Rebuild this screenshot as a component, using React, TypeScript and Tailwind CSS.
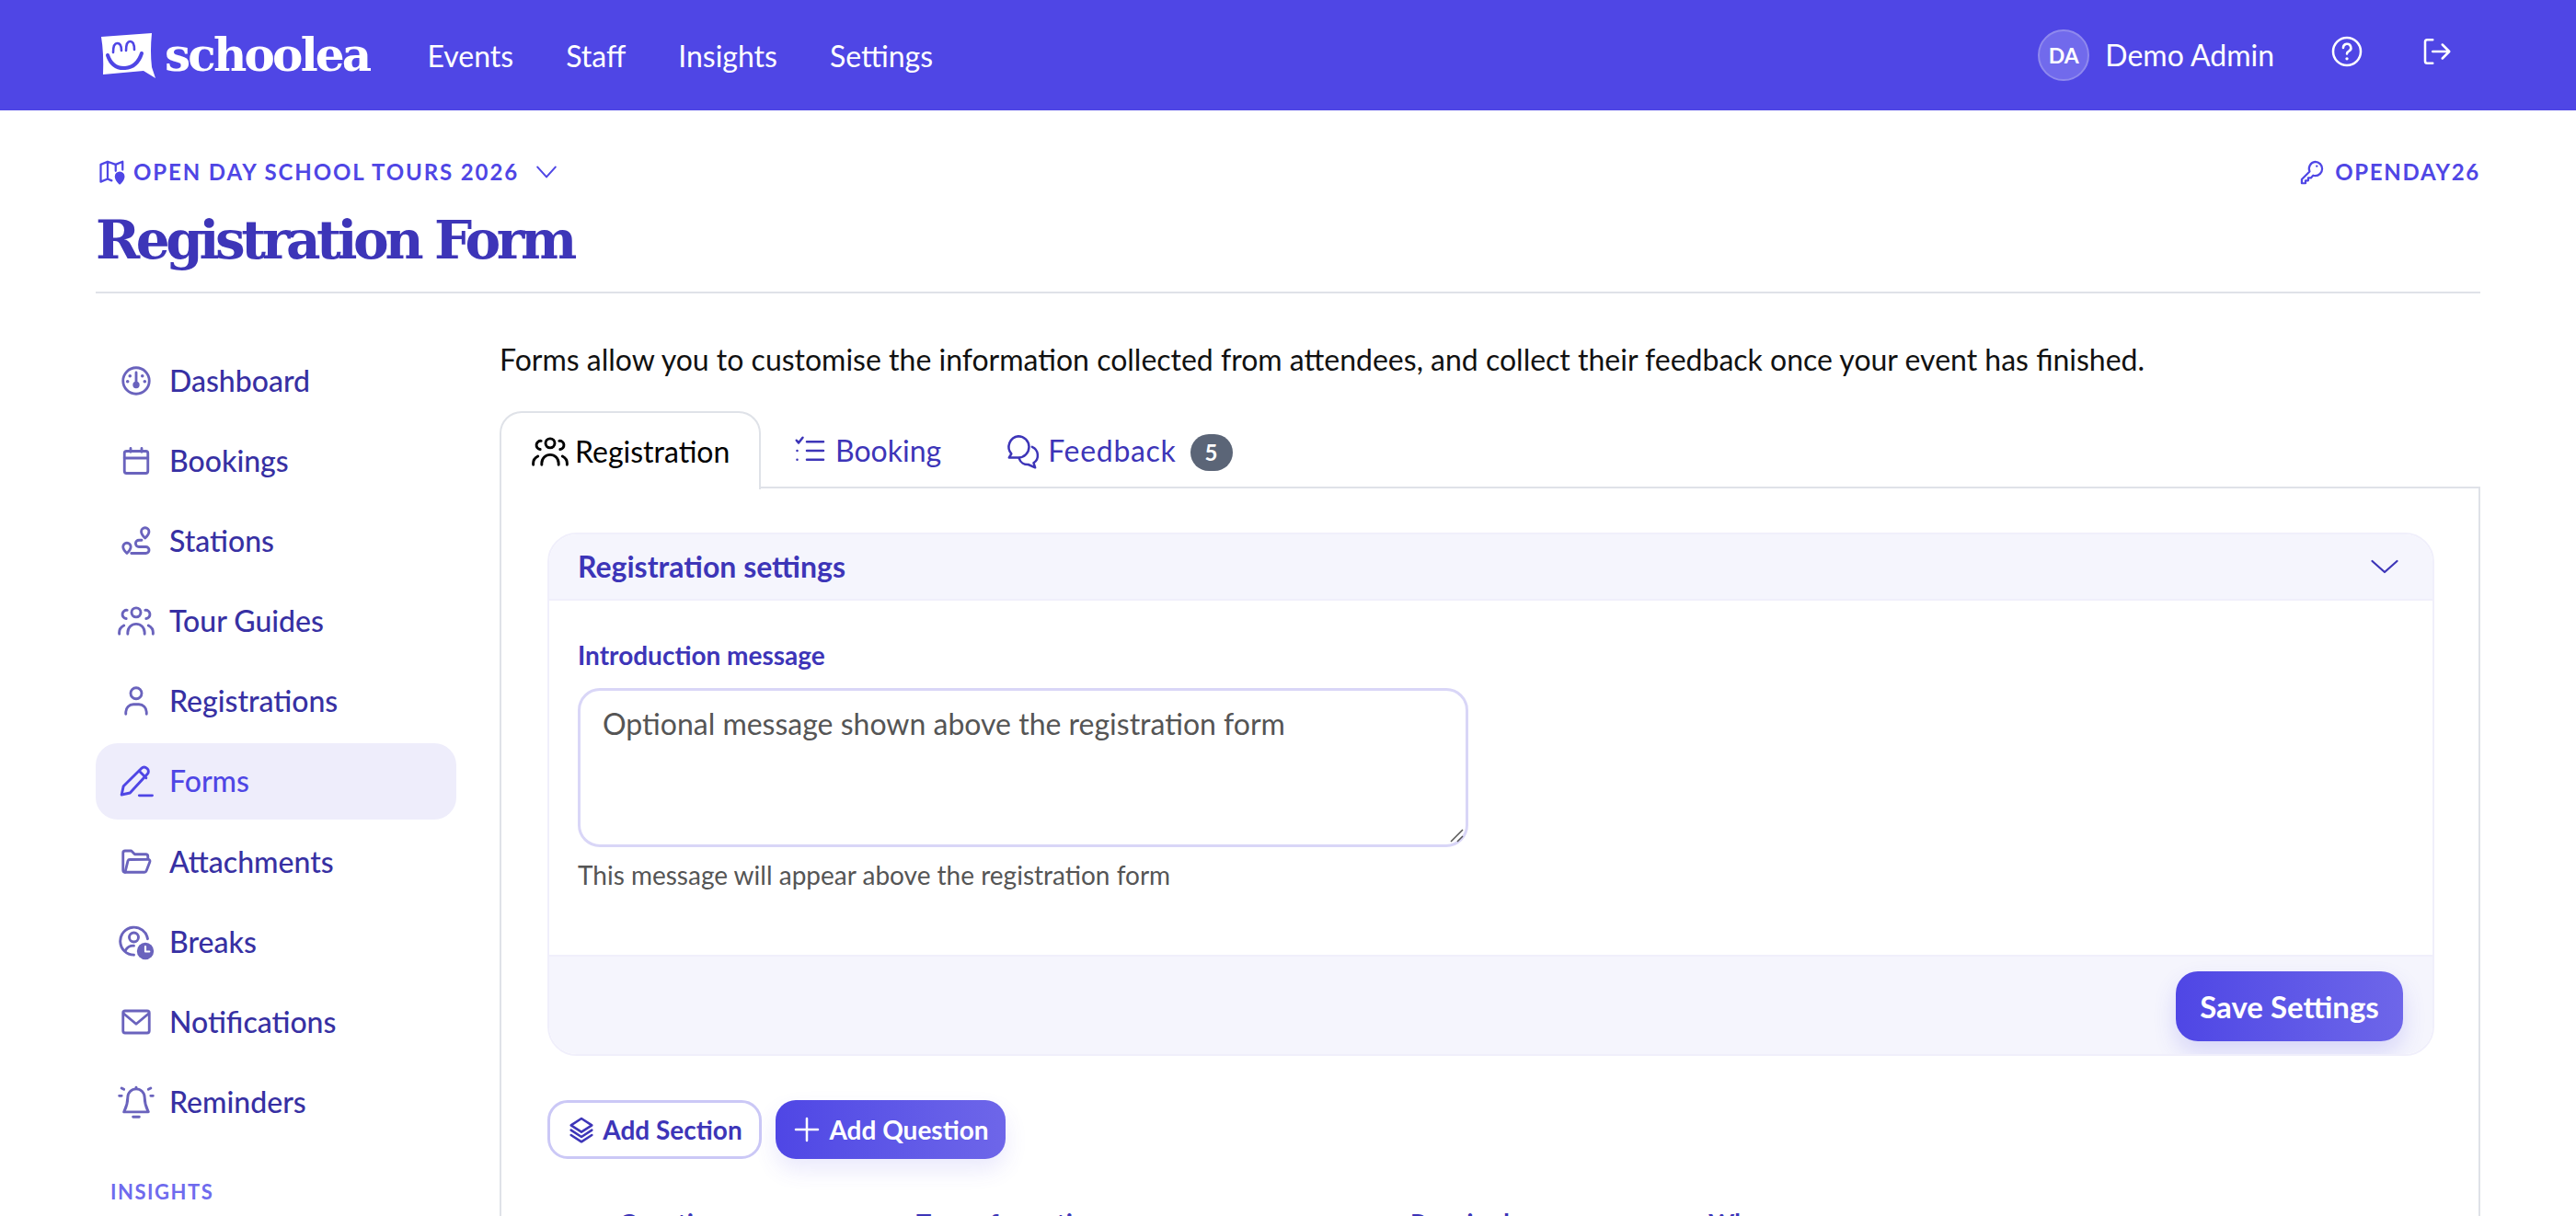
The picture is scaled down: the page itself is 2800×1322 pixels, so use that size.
import type { ReactNode } from 'react';

const sans = '[font-family:Lato,"Liberation_Sans",sans-serif]';

function Svg({ className, children, sw = 1.9 }: { className?: string; children: ReactNode; sw?: number }) {
  return (
    <svg viewBox="0 0 24 24" fill="none" stroke="currentColor" strokeWidth={sw} strokeLinecap="round" strokeLinejoin="round" className={className}>
      {children}
    </svg>
  );
}

function LogoMark() {
  return (
    <svg viewBox="0 0 60 49" className="h-[49px] w-[60px] shrink-0">
      <path d="M1 4 L56 0 Q54 20 56 37 L60 49 L47 41 L3 45 Q4 22 1 4 Z" fill="#fff" />
      <path d="M8 24 Q13 39 27 38 Q40 37 45 22" fill="none" stroke="#4f46e5" strokeWidth="4" strokeLinecap="round" />
      <path d="M14 21 Q14 11 18.500 11 Q23 11 23 19 M28 19 Q28 9 32.500 9 Q37 9 37 18" fill="none" stroke="#4f46e5" strokeWidth="2.600" strokeLinecap="round" />
    </svg>
  );
}

const icons: Record<string, ReactNode> = {
  Dashboard: (
    <>
      <circle cx="12" cy="12" r="9.500" />
      <path d="M12 6v8" />
      <circle cx="12" cy="15" r="1.500" fill="currentColor" />
      <path d="M7.500 8.500h.01M16.500 8.500h.01M5.800 12.500h.01M18.200 12.500h.01" strokeWidth="2.400" />
    </>
  ),
  Bookings: (
    <>
      <rect x="3.500" y="5" width="17" height="16" rx="1.500" />
      <path d="M3.500 10h17M8 3v2.500M16 3v2.500" />
    </>
  ),
  Stations: (
    <>
      <path d="M18.500 2.500a2.800 2.800 0 0 1 2.800 2.800c0 2-2.800 4.700-2.800 4.700s-2.800-2.700-2.800-4.700a2.800 2.800 0 0 1 2.800-2.800Z" />
      <path d="M5.300 13.500a2.800 2.800 0 0 1 2.800 2.800c0 2-2.800 4.700-2.800 4.700s-2.800-2.700-2.800-4.700a2.800 2.800 0 0 1 2.800-2.800Z" />
      <path d="M16 11.500h-2a2.400 2.400 0 0 0 0 4.800h5a2.300 2.300 0 0 1 0 4.700H8.500" />
    </>
  ),
  'Tour Guides': (
    <>
      <circle cx="12" cy="6.500" r="3" />
      <path d="M5.500 10.500a2.600 2.600 0 0 1 .6-5.500M18.500 10.500a2.600 2.600 0 0 0-.6-5.500" />
      <path d="M6.500 20.500v-1a5.500 5.500 0 0 1 11 0v1M1 20.500a5.500 5.500 0 0 1 3-5.500M23 20.500a5.500 5.500 0 0 0-3-5.500" />
    </>
  ),
  Registrations: (
    <>
      <circle cx="12" cy="6.500" r="4" />
      <path d="M4.500 21.500v-1.500a5.500 5.500 0 0 1 5.500-5.500h4a5.500 5.500 0 0 1 5.500 5.500v1.500" />
    </>
  ),
  Forms: (
    <>
      <path d="M2.500 21l1.200-5.500L15.500 3.700a2.400 2.400 0 0 1 3.400 0l.4.4a2.400 2.400 0 0 1 0 3.400L8 19.800 2.500 21Z" />
      <path d="M14 5.500l4.500 4.500M14 21.500h8.500" />
    </>
  ),
  Attachments: (
    <>
      <path d="M4 19.500a1.500 1.500 0 0 1-1.500-1.500V5.500A1.500 1.500 0 0 1 4 4h4.500l2.500 2.500h8a1.500 1.500 0 0 1 1.500 1.500v1.500" />
      <path d="M4 19.500h14a1.500 1.500 0 0 0 1.400-1l2.500-6.500a1.200 1.200 0 0 0-1.100-1.700H7.500A1.500 1.500 0 0 0 6 11.300L4 19.500Z" />
    </>
  ),
  Breaks: (
    <>
      <path d="M10.500 20.500A9 9 0 1 1 19.500 10" />
      <circle cx="10.500" cy="9" r="3" />
      <path d="M5 17.500a6 6 0 0 1 5.500-3" />
      <circle cx="18" cy="18" r="5.500" fill="currentColor" stroke="none" />
      <path d="M18 15v3.300h2.600" stroke="#fff" strokeWidth="1.300" />
    </>
  ),
  Notifications: (
    <>
      <rect x="2.500" y="4" width="19" height="16" rx="1.500" />
      <path d="M3 6l9 7.500L21 6" />
    </>
  ),
  Reminders: (
    <>
      <path d="M12 3.500a5.500 5.500 0 0 0-5.500 5.500c0 5-1.800 8-2.500 9.500h16c-.7-1.500-2.500-4.500-2.500-9.500A5.500 5.500 0 0 0 12 3.500Z" />
      <path d="M12 2.500v1M10 21.700h4M1 8h1.500M21.500 8H23M2.500 3l1.500.8M21.500 3l-1.500.8" />
    </>
  ),
};

const sideItems = ['Dashboard', 'Bookings', 'Stations', 'Tour Guides', 'Registrations', 'Forms', 'Attachments', 'Breaks', 'Notifications', 'Reminders'];
const bigIcons = ['Tour Guides', 'Forms', 'Breaks', 'Reminders'];

function SideItem({ label }: { label: string }) {
  const active = label === 'Forms';
  const big = bigIcons.includes(label);
  return (
    <div className={`flex h-[83px] shrink-0 items-center rounded-[24px] pl-[24px] ${active ? 'bg-[#eeedfb] text-[#4f46e5]' : 'text-[#3730a3]'}`}>
      <span className={`flex w-[40px] justify-center ${active ? 'text-[#4f46e5]' : 'text-[#6a63bd]'}`}>
        <Svg className={big ? 'h-[40px] w-[40px]' : 'h-[36px] w-[36px]'} sw={big ? 1.75 : 1.9}>{icons[label]}</Svg>
      </span>
      <span className="ml-[16px] text-[32px] font-medium leading-none">{label}</span>
    </div>
  );
}

export default function App() {
  return (
    <div className={`h-screen overflow-hidden bg-white ${sans}`}>
      <header className="flex h-[120px] items-center justify-between bg-[#4f46e5] pl-[109px] pr-[134px] text-white">
        <div className="flex items-center">
          <div className="flex items-center gap-[10px]">
            <LogoMark />
            <span className="[font-family:'DejaVu_Serif',serif] text-[50px] font-bold leading-none tracking-[-2.8px]">schoolea</span>
          </div>
          <nav className="ml-[63px] mt-[1px] flex gap-[57px] text-[32px] leading-none">
            <span>Events</span>
            <span>Staff</span>
            <span>Insights</span>
            <span>Settings</span>
          </nav>
        </div>
        <div className="flex items-center">
          <div className="flex h-[56px] w-[56px] items-center justify-center rounded-full border-2 border-[#8f89ee] bg-[#716aec] text-[23px] font-bold">DA</div>
          <span className="ml-[17px] text-[32px] leading-none">Demo Admin</span>
          <Svg className="mb-[8px] ml-[61px] h-[36px] w-[36px]" sw={1.7}>
            <circle cx="12" cy="12" r="10" />
            <path d="M9.300 9.300a2.800 2.800 0 1 1 3.900 2.600c-.8.400-1.200 1-1.200 1.800" />
            <path d="M12 17.200h.01" strokeWidth="2.200" />
          </Svg>
          <Svg className="mb-[8px] ml-[61px] h-[36px] w-[36px]" sw={1.7}>
            <path d="M9.500 3.500H5.500a1.500 1.500 0 0 0-1.500 1.500v14a1.500 1.500 0 0 0 1.500 1.500h4M9.500 12H21M16.500 7l5 5-5 5" />
          </Svg>
        </div>
      </header>

      <main className="px-[104px]">
        <div className="flex items-center justify-between pt-[52px] text-[#4f46e5]">
          <div className="flex items-center">
            <Svg className="ml-[3px] h-[30px] w-[30px]" sw={1.8}>
              <path d="M2 5.500L8 3l7 2.500L21 3v7M2 5.500v15L8 18l3.500 1.500M8 3v15M15 5.500V11" />
              <path d="M18.500 12.500a3.400 3.400 0 0 1 3.400 3.400c0 2.500-3.400 6-3.400 6s-3.400-3.500-3.400-6a3.400 3.400 0 0 1 3.400-3.400Z" fill="currentColor" />
            </Svg>
            <span className="ml-[8px] text-[24px] font-bold leading-none tracking-[1.9px]">OPEN DAY SCHOOL TOURS 2026</span>
            <Svg className="ml-[17px] h-[26px] w-[26px]"><path d="M3 7l9 10 9-10" /></Svg>
          </div>
          <div className="flex items-center">
            <Svg className="h-[28px] w-[28px]">
              <path d="M15 2.500a6.500 6.500 0 0 1 0 13c-.7 0-1.300-.1-1.900-.3L11 17.500H8.500V20H6v2.500H2.500v-3.700l7.300-7.300a6.500 6.500 0 0 1 5.200-9Z" />
              <path d="M16.500 6.500h.01" strokeWidth="2" />
            </Svg>
            <span className="ml-[11px] text-[24px] font-bold leading-none tracking-[1.7px]">OPENDAY26</span>
          </div>
        </div>
        <h1 className="mt-[28px] h-[62px] [font-family:'DejaVu_Serif',serif] text-[58px] font-bold leading-[62px] tracking-[-4.4px] text-[#3d35b8]">Registration Form</h1>
        <div className="mt-[25px] h-[2px] bg-[#dfe2e8]" />

        <div className="mt-[53px] flex gap-[47px]">
          <aside className="flex w-[392px] shrink-0 flex-col gap-[4.2px]">
            {sideItems.map((s) => <SideItem key={s} label={s} />)}
            <div className="ml-[16px] mt-[41px] text-[22px] font-bold leading-none tracking-[1.5px] text-[#6f6bee]">INSIGHTS</div>
          </aside>

          <section className="min-w-0 flex-1">
            <p className="text-[32px] leading-[38px] text-[#111]">Forms allow you to customise the information collected from attendees, and collect their feedback once your event has finished.</p>

            <div className="mt-[37px] flex h-[84px] items-stretch">
              <div className="relative z-10 flex h-[85px] w-[284px] items-center rounded-t-[24px] border-2 border-b-0 border-[#dfe2e8] bg-white pl-[33px] text-black">
                <Svg className="h-[40px] w-[40px]" sw={1.75}>{icons['Tour Guides']}</Svg>
                <span className="ml-[7px] text-[32px] leading-none">Registration</span>
              </div>
              <div className="flex flex-1 items-center border-b-2 border-[#dfe2e8] pl-[35px] pt-[3px] text-[#3d35b8]">
                <Svg className="h-[36px] w-[36px]" sw={1.7}>
                  <path d="M10 5.500h12M10 12h12M10 18.500h12M2.500 4.500l1.500 1.800L7 2.500M3 12h.01M3 18.500h.01" />
                </Svg>
                <span className="ml-[10px] text-[32px] leading-none">Booking</span>
                <Svg className="ml-[68px] h-[40px] w-[40px]" sw={1.5}>
                  <path d="M9.500 2.500a7 7 0 0 1 7 7 7 7 0 0 1-7 7H3.500l1.500-2.500a7 7 0 0 1 4.500-11.500Z" />
                  <path d="M18.500 9.500a6 6 0 0 1 1 10.500l1 3-4.500-2a6 6 0 0 1-6-4" />
                </Svg>
                <span className="ml-[8px] text-[32px] leading-none tracking-[0.7px]">Feedback</span>
                <span className="ml-[15px] mt-[4px] flex h-[40px] w-[46px] items-center justify-center rounded-full bg-[#5b6577] text-[24px] font-bold leading-none text-white">5</span>
              </div>
            </div>

            <div className="h-[900px] border-x-2 border-[#dfe2e8] pl-[50px] pr-[48px] pt-[48px]">
              <div className="h-[569px] overflow-hidden rounded-[32px] border-2 border-[#f0effb]">
                <div className="flex h-[72px] items-center justify-between border-b-2 border-[#f0effb] bg-[#f5f5fd] pl-[31px] pr-[34px]">
                  <span className="text-[32px] font-bold leading-none text-[#3d35b8]">Registration settings</span>
                  <Svg className="h-[36px] w-[36px] text-[#3d35b8]" sw={1.5}><path d="M3 8l9 8 9-8" /></Svg>
                </div>
                <div className="h-[385px] pl-[31px] pr-[32px] pt-[45px]">
                  <label className="block text-[28px] font-bold leading-none text-[#3d35b8]">Introduction message</label>
                  <div className="relative mt-[22px] h-[173px] w-[968px] rounded-[24px] border-[3px] border-[#d9d6f7] px-[24px] pt-[18px] text-[32px] leading-[36px] text-[#555]">
                    Optional message shown above the registration form
                    <svg viewBox="0 0 16 16" className="absolute bottom-[2px] right-[2px] h-[16px] w-[16px]" stroke="#555" strokeWidth="1.5">
                      <path d="M2 15L15 2M9 15l6-6" />
                    </svg>
                  </div>
                  <p className="mt-[16px] text-[28px] leading-none text-[#555]">This message will appear above the registration form</p>
                </div>
                <div className="flex h-[110px] items-start justify-end border-t-2 border-[#f0effb] bg-[#f5f5fd] pr-[32px] pt-[16px]">
                  <div className="flex h-[76px] w-[247px] items-center justify-center rounded-[24px] bg-gradient-to-r from-[#4f46e5] to-[#6e66e9] text-[33px] font-bold leading-none text-white shadow-[0_12px_24px_rgba(79,70,229,0.18)]">Save Settings</div>
                </div>
              </div>

              <div className="mt-[48px] flex gap-[15px]">
                <div className="flex h-[64px] w-[233px] items-center justify-center rounded-[22px] border-[3px] border-[#cbc8f6] text-[28px] font-bold leading-none text-[#3d35b8]">
                  <Svg className="h-[32px] w-[32px]">
                    <path d="M12 3l8.500 5.500L12 14 3.500 8.500 12 3Z" />
                    <path d="M3.500 12.500L12 18l8.500-5.500M3.500 16.500L12 22l8.500-5.500" />
                  </Svg>
                  <span className="ml-[7px]">Add Section</span>
                </div>
                <div className="flex h-[64px] w-[250px] items-center justify-center rounded-[22px] bg-gradient-to-r from-[#4f46e5] to-[#6e66e9] text-[28px] font-bold leading-none text-white shadow-[0_12px_24px_rgba(79,70,229,0.12)]">
                  <Svg className="h-[32px] w-[32px]"><path d="M12 3v18M3 12h18" /></Svg>
                  <span className="ml-[8px]">Add Question</span>
                </div>
              </div>

              <div className="ml-[78px] mt-[55px] flex text-[27px] font-bold leading-none text-[#3d35b8]">
                <span className="w-[323px]">Question</span>
                <span className="w-[537px]">Type of question</span>
                <span className="w-[324px]">Required</span>
                <span>When</span>
              </div>
            </div>
          </section>
        </div>
      </main>
    </div>
  );
}
